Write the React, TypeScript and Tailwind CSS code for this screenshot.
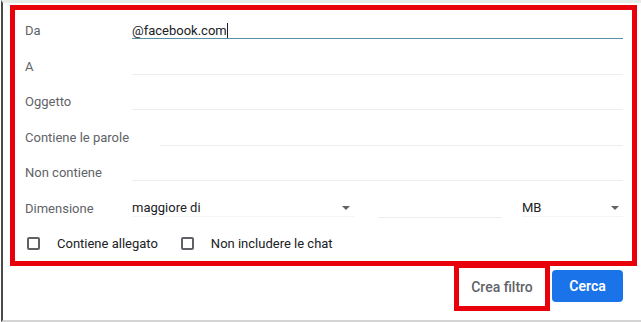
import { type ReactNode } from 'react'

const labelCls = 'w-[107px] shrink-0 text-[13px] text-[#5f6368]'
const lineCls = 'h-[17px] border-b border-[#eeeeee]'

function Row({ label, children }: { label: string; children?: ReactNode }) {
  return (
    <div className="flex h-[35.5px] items-center">
      <div className={labelCls}>{label}</div>
      <div className="flex flex-1 items-center">{children}</div>
    </div>
  )
}

function Caret() {
  return (
    <svg width="8" height="4" viewBox="0 0 8 4" className="shrink-0">
      <path d="M0 0h8L4 4z" fill="#5f6368" />
    </svg>
  )
}

function Checkbox({ label }: { label: string }) {
  return (
    <label className="flex items-center">
      <span className="ml-[2px] h-[13px] w-[13px] rounded-[2px] border-2 border-[#5f6368]" />
      <span className="ml-[17px] text-[13px] text-[#202124]">{label}</span>
    </label>
  )
}

export default function App() {
  return (
    <div
      className="ml-[1px] h-[322px] w-[640px] border-l-2 border-t-[3px] border-b-2 border-l-[#4a4a4a] border-t-[#e6ede8] border-b-[#d4d4d4] bg-white"
      style={{ fontFamily: 'Roboto, "Liberation Sans", sans-serif' }}
    >
      <div className="ml-[7px] mt-[2px] h-[261px] w-[627px] border-[5px] border-[#e8000b] pl-[10px] pr-[9px] pt-[3px]">
        <Row label="Da">
          <div className="flex h-[17px] flex-1 items-center border-b border-[#5b8fa6] text-[13px] text-[#202124]">
            @facebook.com<span className="h-[15px] w-px bg-[#202124]" />
          </div>
        </Row>
        <Row label="A">
          <div className={`${lineCls} flex-1`} />
        </Row>
        <Row label="Oggetto">
          <div className={`${lineCls} flex-1`} />
        </Row>
        <div className="flex h-[35.5px] items-center">
          <div className="text-[13px] text-[#5f6368]">Contiene le parole</div>
          <div className={`${lineCls} ml-[31px] mt-[1px] flex-1`} />
        </div>
        <Row label="Non contiene">
          <div className={`${lineCls} flex-1`} />
        </Row>
        <Row label="Dimensione">
          <div className="flex h-[17px] w-[222px] items-center justify-between border-b border-[#f4f4f4] pr-[4px] text-[13px] text-[#202124]">
            maggiore di
            <Caret />
          </div>
          <div className={`${lineCls} ml-[24px] w-[124px] mt-[3px]`} />
          <div className="ml-[20px] flex h-[17px] flex-1 items-center justify-between border-b border-[#f4f4f4] pr-[4px] text-[13px] text-[#202124]">
            MB
            <Caret />
          </div>
        </Row>
        <div className="flex h-[35.5px] items-center gap-[21px]">
          <Checkbox label="Contiene allegato" />
          <Checkbox label="Non includere le chat" />
        </div>
      </div>
      <div className="flex justify-end pr-[18px]">
        <div className="-mt-[3px] flex h-[48px] w-[96px] items-center justify-center border-[5px] border-[#e8000b] text-[14px] font-medium text-[#5f6368]">
          Crea filtro
        </div>
        <button className="ml-[2px] mt-[4px] h-[32px] w-[71px] rounded-[4px] bg-[#1a73e8] text-[14px] font-semibold text-white">
          Cerca
        </button>
      </div>
    </div>
  )
}
